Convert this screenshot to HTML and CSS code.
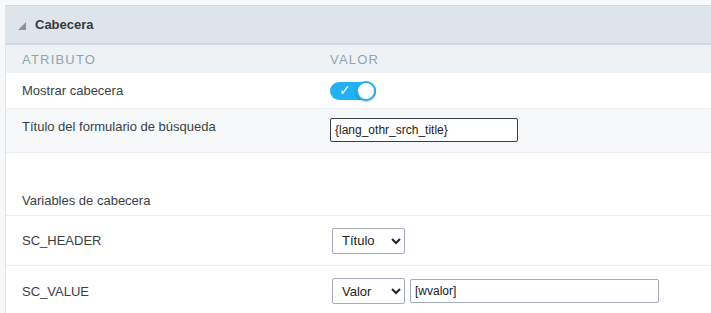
FILE: index.html
```html
<!DOCTYPE html>
<html lang="es">
<head>
    <meta charset="UTF-8">
    <title>Cabecera</title>
    <link rel="stylesheet" href="styles.css">
</head>
<body>
<div class="panel">
    <div class="panel-title">
        <span class="arrow"></span>
        <span>Cabecera</span>
    </div>
    <div class="row head">
        <div class="label">Atributo</div>
        <div class="value">Valor</div>
    </div>
    <div class="row">
        <div class="label">Mostrar cabecera</div>
        <div class="value">
            <span class="toggle"><span class="check">&#10003;</span><span class="knob"></span></span>
        </div>
    </div>
    <div class="row alt top">
        <div class="label">Título del formulario de búsqueda</div>
        <div class="value"><input class="txt dark" type="text" value="{lang_othr_srch_title}"></div>
    </div>
    <div class="subtitle">Variables de cabecera</div>
    <div class="row tall">
        <div class="label">SC_HEADER</div>
        <div class="value">
            <select class="sel"><option>Título</option></select>
        </div>
    </div>
    <div class="row tall last">
        <div class="label">SC_VALUE</div>
        <div class="value">
            <select class="sel"><option>Valor</option></select>
            <input class="txt wide" type="text" value="[wvalor]">
        </div>
    </div>
</div>
</body>
</html>
```

FILE: styles.css
```css
*{
    margin: 0;
    padding: 0;
    box-sizing: border-box;
}
body{
    background: #f7f8fa;
    font-family: "Liberation Sans", Arial, sans-serif;
    font-size: 13px;
    color: #3a3f45;
    padding: 5px 0 0 5px;
}
.panel{
    background: #fff;
    border-left: 1px solid #dde3e9;
    border-top: 1px solid #d3d9df;
    height: 320px;
}
.panel-title{
    height: 39px;
    background: #dfe4eb;
    border-bottom: 2px solid #d1d8df;
    display: flex;
    align-items: center;
    padding-left: 12px;
    font-weight: bold;
    color: #333a40;
}
.arrow{
    width: 0;
    height: 0;
    border-left: 8px solid transparent;
    border-bottom: 8px solid #8b9299;
    margin-right: 9px;
    margin-top: 2px;
}
.row{
    display: flex;
    align-items: center;
    border-bottom: 1px solid #eceef1;
    height: 36px;
}
.row.head{
    height: 28px;
    background: #eef2f5;
    border-bottom: none;
    text-transform: uppercase;
    letter-spacing: 1.2px;
    color: #8ea3b1;
}
.row.alt{
    background: #f7f8fa;
    height: 44px;
}
.row.top{
    align-items: flex-start;
    padding-top: 10px;
}
.row.tall{
    height: 50px;
}
.row.last{
    border-bottom: none;
}
.label{
    width: 324px;
    padding-left: 16px;
    flex-shrink: 0;
}
.value{
    display: flex;
    align-items: center;
    gap: 5px;
}
.subtitle{
    height: 63px;
    padding: 40px 0 0 16px;
    border-bottom: 1px solid #eceef1;
}
.toggle{
    position: relative;
    display: block;
    width: 46px;
    height: 18px;
    border-radius: 9px;
    background: #21b1f4;
}
.check{
    position: absolute;
    left: 9px;
    top: 0;
    color: #fff;
    font-family: "DejaVu Sans", sans-serif;
    font-size: 14px;
    font-weight: bold;
}
.knob{
    position: absolute;
    right: 0;
    top: -1px;
    width: 20px;
    height: 20px;
    border-radius: 50%;
    background: #fff;
    border: 2px solid #21b1f4;
    box-shadow: 0 1px 2px rgba(0,0,0,0.25);
}
.txt{
    height: 24px;
    font-family: "Liberation Sans", Arial, sans-serif;
    font-size: 12px;
    color: #222;
    padding: 0 4px;
    border: 1px solid #a4abb6;
    border-radius: 2px;
    outline: none;
}
.txt.dark{
    width: 188px;
    border-color: #3a3f45;
    margin-top: -1px;
}
.txt.wide{
    width: 249px;
}
.sel{
    width: 73px;
    height: 26px;
    margin-left: 2px;
    padding-left: 5px;
    font-family: "Liberation Sans", Arial, sans-serif;
    font-size: 13px;
    color: #222;
    background: #fff;
    border: 1px solid #a4abb6;
    border-radius: 2px;
}
```
